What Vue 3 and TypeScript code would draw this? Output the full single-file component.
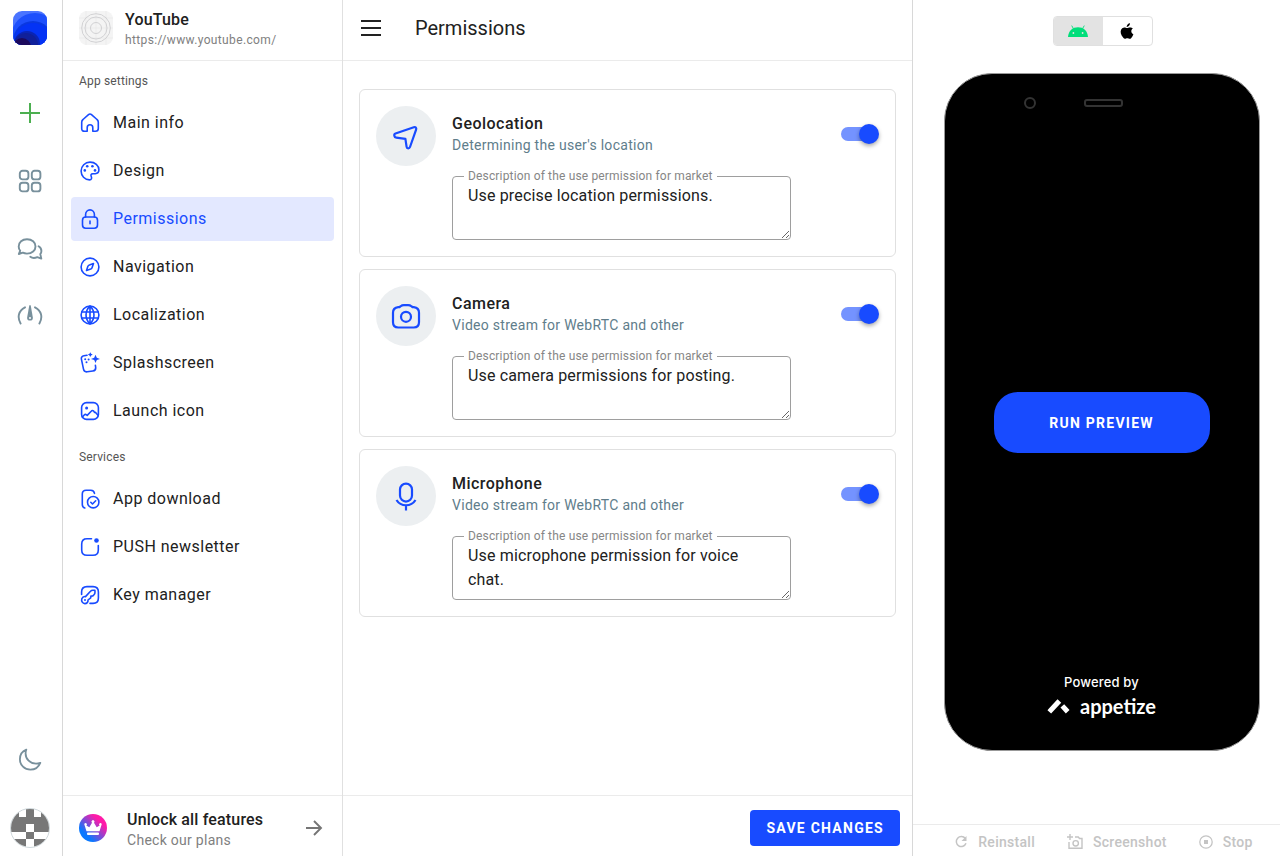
<script setup lang="ts">
import { ref } from 'vue'

interface NavItem {
  id: string
  label: string
  icon: string
}

interface Permission {
  id: string
  title: string
  subtitle: string
  description: string
  enabled: boolean
}

const settings: NavItem[] = [
  { id: 'main', label: 'Main info', icon: 'home' },
  { id: 'design', label: 'Design', icon: 'palette' },
  { id: 'permissions', label: 'Permissions', icon: 'lock' },
  { id: 'navigation', label: 'Navigation', icon: 'compass' },
  { id: 'localization', label: 'Localization', icon: 'globe' },
  { id: 'splash', label: 'Splashscreen', icon: 'splash' },
  { id: 'launch', label: 'Launch icon', icon: 'image' },
]

const services: NavItem[] = [
  { id: 'download', label: 'App download', icon: 'download' },
  { id: 'push', label: 'PUSH newsletter', icon: 'push' },
  { id: 'keys', label: 'Key manager', icon: 'key' },
]

const sections = [
  { title: 'App settings', items: settings },
  { title: 'Services', items: services },
]

const active = ref('permissions')
const platform = ref<'android' | 'ios'>('android')

const permissions = ref<Permission[]>([
  {
    id: 'geo',
    title: 'Geolocation',
    subtitle: "Determining the user's location",
    description: 'Use precise location permissions.',
    enabled: true,
  },
  {
    id: 'camera',
    title: 'Camera',
    subtitle: 'Video stream for WebRTC and other',
    description: 'Use camera permissions for posting.',
    enabled: true,
  },
  {
    id: 'mic',
    title: 'Microphone',
    subtitle: 'Video stream for WebRTC and other',
    description: 'Use microphone permission for voice chat.',
    enabled: true,
  },
])
</script>

<template>
  <div class="layout">
    <aside class="rail">
      <a class="logo" href="#" aria-label="Home">
        <svg width="34" height="34" viewBox="0 0 34 34">
          <defs>
            <clipPath id="logoClip"><rect width="34" height="34" rx="9" /></clipPath>
          </defs>
          <g clip-path="url(#logoClip)">
            <rect width="34" height="34" fill="#4a74ff" />
            <circle cx="22" cy="26" r="24" fill="#1e50fc" />
            <circle cx="20" cy="30" r="20" fill="#0a38e0" />
            <circle cx="20" cy="31" r="19" fill="#0433f5" />
            <circle cx="14" cy="33" r="13" fill="#0a24b4" />
            <circle cx="13" cy="34" r="12" fill="#10209a" />
            <circle cx="9" cy="36" r="9" fill="#1c0a5c" />
          </g>
        </svg>
      </a>
      <nav class="rail-nav" aria-label="Workspace">
        <button class="rail-btn add" aria-label="Add app">
          <svg width="20" height="20" viewBox="0 0 20 20"><path d="M10 0v20M0 10h20" stroke-width="2" /></svg>
        </button>
        <button class="rail-btn" aria-label="Apps">
          <svg width="24" height="24" viewBox="0 0 24 24" stroke-width="1.9">
            <rect x="1.800" y="1.800" width="8.6" height="8.6" rx="2.7" />
            <rect x="13.800" y="1.800" width="8.6" height="8.6" rx="2.7" />
            <rect x="1.800" y="13.800" width="8.6" height="8.6" rx="2.7" />
            <rect x="13.800" y="13.800" width="8.6" height="8.6" rx="2.7" />
          </svg>
        </button>
        <button class="rail-btn" aria-label="Messages">
          <svg width="26" height="24" viewBox="0 0 26 24" stroke-width="1.9" stroke-linecap="round" stroke-linejoin="round">
            <path d="M10 2.200c5 0 8.500 3.200 8.500 7.200s-3.500 7.200-8.500 7.200c-1.600 0-3-.3-4.200-.9L1.800 17l1.400-3.300C2.200 12.500 1.700 11 1.700 9.400 1.700 5.400 5.200 2.200 10 2.200z" />
            <path d="M21.600 9.200c1.700 1 2.800 2.700 2.800 4.700 0 1.200-.4 2.300-1.100 3.200l1 4.500-4-1.400c-2.200 1-5.500.8-7-.4" />
          </svg>
        </button>
        <button class="rail-btn" aria-label="Performance">
          <svg width="26" height="24" viewBox="0 2 26 24" stroke-width="1.900" stroke-linecap="round">
            <path d="M8 4.300C1.500 7.400 0 14.500 3.600 20.500M18 4.300c6.500 3.100 8 10.200 4.400 16.200" />
            <path d="M12.300 2.200l-2.200 12.500a2.900 2.900 0 1 0 5.800 0L13.700 2.200z" fill="currentColor" stroke="none" />
            <circle cx="13" cy="15" r="1" fill="#fff" stroke="none" />
          </svg>
        </button>
      </nav>
      <div class="rail-bottom">
        <button class="rail-btn" aria-label="Dark theme">
          <svg width="24" height="24" viewBox="0 0 24 24" stroke-width="1.800" stroke-linejoin="round">
            <path d="M8.300 1.700C4.300 3.300 1.900 7 1.900 11.300c0 5.900 4.700 10.400 10.500 10.400 4.400 0 8.200-2.600 9.900-6.800-1.600.6-2.700.8-4.300.8-5.800 0-10.400-4.500-10.400-10.300 0-1.300.2-2.500.7-3.700z" />
          </svg>
        </button>
        <button class="avatar" aria-label="Account">
          <svg width="38" height="38" viewBox="0 0 5 5" shape-rendering="crispEdges">
            <path d="M0 0h1v1h1V0h1v1h1V0h1v3H3V2H2v1H0zM2 3h1v1H2zM0 4h2v1H0zM3 4h2v1H3z" fill="#777" />
          </svg>
        </button>
      </div>
    </aside>

    <aside class="sidebar">
      <header class="bar app-head">
        <svg class="app-icon" width="34" height="34" viewBox="0 0 34 34" fill="none">
          <rect width="34" height="34" rx="8" fill="#f4f4f4" />
          <path d="M0 7h34M0 17h34M0 27h34M7 0v34M17 0v34M27 0v34" stroke="#e8e8e8" stroke-width="0.700" />
          <circle cx="17" cy="17" r="5.500" stroke="#d2d2d4" />
          <circle cx="17" cy="17" r="11" stroke="#d2d2d4" />
          <circle cx="17" cy="17" r="14.300" stroke="#d2d2d4" />
        </svg>
        <div class="app-text">
          <div class="app-name">YouTube</div>
          <div class="app-url">https://www.youtube.com/</div>
        </div>
      </header>

      <nav class="menu" aria-label="App sections">
        <section v-for="section in sections" :key="section.title">
          <h2 class="menu-title">{{ section.title }}</h2>
          <a
            v-for="item in section.items"
            :key="item.id"
            class="menu-item"
            :class="{ active: active === item.id }"
            href="#"
            @click.prevent="active = item.id"
          >
            <svg width="22" height="22" viewBox="0 0 22 22" class="menu-icon">
              <g v-if="item.icon === 'home'">
                <path d="M2.700 10.200c0-1.200.4-2 1.300-2.700l5.500-4.800c.9-.8 2.100-.8 3 0L18 7.500c.9.700 1.300 1.500 1.300 2.700v6.300c0 1.800-1 2.800-2.800 2.800h-2.700v-3.600c0-1.700-1.100-2.900-2.800-2.900s-2.800 1.200-2.800 2.900v3.600H5.500c-1.800 0-2.800-1-2.800-2.800z" />
              </g>
              <g v-else-if="item.icon === 'palette'">
                <path d="M11 2.100c5 0 8.900 3.400 8.900 7.700 0 2.500-1.300 3.800-3.700 3.900l-2.500.1c-1.700.1-2.100 1.200-1.500 2.500.9 1.900.3 3.600-1.600 3.600-4.900 0-8.500-4-8.500-8.900 0-4.900 4-8.900 8.900-8.900z" />
                <g class="dots"><circle cx="8.200" cy="6.300" r="1.300" /><circle cx="13.400" cy="6.300" r="1.300" /><circle cx="5.800" cy="10.400" r="1.300" /><circle cx="16" cy="10.400" r="1.300" /></g>
              </g>
              <g v-else-if="item.icon === 'lock'">
                <rect x="3.500" y="9" width="15" height="11.200" rx="3.200" />
                <path d="M6.600 9V6.500C6.600 3.800 8.500 1.900 11 1.900s4.400 1.900 4.400 4.600V9M11 13v2.800" />
              </g>
              <g v-else-if="item.icon === 'compass'">
                <circle cx="11" cy="11" r="8.900" />
                <path d="M14.500 7.500l-1.400 4.100c-.2.700-.7 1.200-1.400 1.500l-4.200 1.400 1.400-4.200c.3-.7.800-1.200 1.500-1.400z" />
              </g>
              <g v-else-if="item.icon === 'globe'">
                <circle cx="11" cy="11" r="8.900" />
                <path d="M11 2.100v17.800M2.800 8h16.400M2.800 14h16.400M11 2.100c-5.300 5-5.300 12.800 0 17.800 5.300-5 5.300-12.800 0-17.800z" />
              </g>
              <g v-else-if="item.icon === 'splash'">
                <path d="M8 3.200l-3 .6C3 4.200 2 5.400 2.400 7.200l2.100 10c.4 2 1.800 2.900 3.700 2.600l5.600-.8c2.100-.3 3.100-1.500 2.900-3.500l-.3-2.200" />
                <path class="dots" d="M16.500 2.700l1.300 3 3.200 1.200-3.200 1.200-1.300 3-1.300-3L12 6.900l3.200-1.200zM11.300.2l.8 1.600 1.600.8-1.600.8-.8 1.600-.8-1.600-1.600-.8 1.600-.8z" />
                <g class="dots"><circle cx="6.200" cy="7.200" r="1" /><circle cx="9.600" cy="7.500" r="1" /><circle cx="7.500" cy="10.300" r="1" /></g>
              </g>
              <g v-else-if="item.icon === 'image'">
                <rect x="2.600" y="2.600" width="16.800" height="16.800" rx="5" />
                <path d="M3.400 17l1.800-2c.8-.8 1.500-.8 2.300-.1l.7.500 4-4.200c.8-.9 1.700-.9 2.500-.1l.8 1.300.8-.1 2.700 3" />
                <circle class="dots" cx="7.600" cy="8" r="1.500" />
              </g>
              <g v-else-if="item.icon === 'download'">
                <path d="M5.800 20C4 19.600 3.300 18.300 3.300 16.500V6c0-2.600 1.200-3.800 3.800-3.800h4.700c2.300 0 3.400 1 3.700 3.200" />
                <circle cx="14.200" cy="14.200" r="5.700" />
                <path d="M11.800 14.300l1.700 1.700 3.200-3.200" />
              </g>
              <g v-else-if="item.icon === 'push'">
                <path d="M12.500 2.800H8c-3.700 0-5.300 1.600-5.300 5.300v5.800c0 3.700 1.600 5.300 5.300 5.300h6c3.700 0 5.300-1.600 5.300-5.300V9.500" />
                <circle class="dots" cx="17.500" cy="4.500" r="2.300" />
              </g>
              <g v-else>
                <path d="M2.600 10.500V8c0-3.800 1.600-5.400 5.400-5.400h6c3.800 0 5.400 1.600 5.400 5.400v6c0 3.800-1.600 5.400-5.400 5.400h-3" />
                <path d="M2.800 14.800a3.400 3.400 0 0 1 3.700-2.200l5-5.300c.8-.9 1.700-1.100 2.800-1l1.600.1.100 1.500c0 1.200-.2 2-1 2.800l-1.200 1.200-1.900.2-.2 1.700-2.700 2.200c.3 2.200-1.200 3.600-3.200 3.600-2.100 0-3.700-2.300-3-4.800z" />
                <circle class="dots" cx="6" cy="16" r="1" />
              </g>
            </svg>
            <span>{{ item.label }}</span>
          </a>
        </section>
      </nav>

      <a class="foot promo" href="#">
        <svg width="28" height="28" viewBox="0 0 28 28">
          <defs>
            <linearGradient id="crownFill" x1="0.150" y1="0.850" x2="0.850" y2="0.150">
              <stop offset="0.150" stop-color="#0a78ff" />
              <stop offset="0.850" stop-color="#ff1aa8" />
            </linearGradient>
          </defs>
          <circle cx="14" cy="14" r="14" fill="url(#crownFill)" />
          <path d="M5.600 11.200a1.300 1.300 0 1 1 1.700.300l3 1.700 2.700-4.400a1.500 1.500 0 1 1 2 0l2.700 4.400 3-1.700a1.300 1.300 0 1 1 1.700-.300l-1.900 6h-13z" fill="#fff" />
          <rect x="8" y="18.600" width="12" height="2.300" rx="1" fill="#fff" />
        </svg>
        <div class="promo-text">
          <div class="promo-title">Unlock all features</div>
          <div class="promo-sub">Check our plans</div>
        </div>
        <svg width="18" height="18" viewBox="0 0 18 18" fill="none" stroke="#757575" stroke-width="1.900">
          <path d="M1 9h15M9 2l7 7-7 7" />
        </svg>
      </a>
    </aside>

    <main class="main">
      <header class="bar main-head">
        <button class="burger" aria-label="Toggle menu">
          <svg width="20" height="18" viewBox="0 0 20 18"><path d="M0 2h20M0 9h20M0 16h20" stroke="#222" stroke-width="2" /></svg>
        </button>
        <h1>Permissions</h1>
      </header>

      <div class="cards">
        <section v-for="p in permissions" :key="p.id" class="card">
          <div class="bubble">
            <svg width="32" height="32" viewBox="0 0 32 32" fill="none" stroke="#184bff" stroke-width="2.200" stroke-linecap="round" stroke-linejoin="round">
              <path v-if="p.id === 'geo'" d="M5.500 13.500L23.800 7.300c1.700-.6 2.900.5 2.300 2.300L20 27c-.7 1.900-3.100 1.800-3.400-.2l-1.200-8-9.100-1.200c-2.200-.3-2.800-3.400-.8-4.100z" />
              <g v-else-if="p.id === 'camera'">
                <path d="M9.500 7.200l1.200-1c.9-.8 1.800-1.100 3.200-1.100h4.200c1.400 0 2.300.3 3.200 1.100l1.200 1h1.300c3.800.5 5.200 2 5.200 5.500v9.600c0 3.700-1.500 5.200-5.200 5.200H8.200C4.500 27.500 3 26 3 22.300v-9.600c0-3.500 1.400-5 5.200-5.500z" />
                <circle cx="16" cy="16.800" r="5" />
              </g>
              <g v-else stroke-linecap="butt">
                <rect x="10" y="3.600" width="12" height="18" rx="6" />
                <path d="M6.500 20c4.300 7 14.700 7 19 0M16 25v5.500" />
              </g>
            </svg>
          </div>
          <div class="card-body">
            <h2 class="card-title">{{ p.title }}</h2>
            <p class="card-sub">{{ p.subtitle }}</p>
            <div class="field">
              <label :for="p.id + '-text'">Description of the use permission for market</label>
              <textarea :id="p.id + '-text'" v-model="p.description" rows="2"></textarea>
            </div>
          </div>
          <input v-model="p.enabled" class="switch" type="checkbox" :aria-label="p.title" />
        </section>
      </div>

      <footer class="foot main-foot">
        <button class="save">SAVE CHANGES</button>
      </footer>
    </main>

    <aside class="preview">
      <div class="platforms" role="group" aria-label="Platform">
        <button :class="{ on: platform === 'android' }" aria-label="Android" @click="platform = 'android'">
          <svg width="20" height="12" viewBox="0 0 20 12">
            <path d="M5.300 3.400L3.700.6M14.700 3.400L16.300.6" stroke="#00de7a" stroke-width="0.900" fill="none" />
            <path d="M0 12C.5 5.500 4.700 2.300 10 2.300s9.500 3.200 10 9.700z" fill="#00de7a" />
            <circle cx="5.400" cy="8" r="0.900" fill="#e3e3e3" /><circle cx="14.600" cy="8" r="0.900" fill="#e3e3e3" />
          </svg>
        </button>
        <button :class="{ on: platform === 'ios' }" aria-label="iOS" @click="platform = 'ios'">
          <svg width="14" height="16" viewBox="0 0 14 16">
            <path d="M9.900.2c.1 1-.3 1.900-.9 2.600-.6.700-1.500 1.200-2.300 1.100-.1-.9.400-1.900.9-2.500C8.200.7 9.200.2 9.900.2zM13 5.500c-1.300.8-1.700 1.700-1.700 2.800 0 1.400.9 2.500 2.100 2.900-.5 1.400-1.200 2.600-2.100 3.700-.5.6-1 .9-1.700.9-.8 0-1.200-.5-2.300-.5s-1.500.5-2.300.5c-.7 0-1.200-.4-1.700-1C.600 11.800.100 8.500 1.200 6.500c.7-1.300 1.900-2.100 3.200-2.100 1.100 0 1.800.6 2.800.6.900 0 1.500-.6 2.800-.6 1.100 0 2.300.4 3 1.100z" />
          </svg>
        </button>
      </div>

      <div class="phone">
        <div class="phone-top"><i class="lens"></i><i class="speaker"></i></div>
        <button class="run">RUN PREVIEW</button>
        <div class="powered">
          <div class="powered-by">Powered by</div>
          <div class="brand">
            <svg width="23" height="16" viewBox="0 0 23 16" stroke="#fff" stroke-width="5" stroke-linecap="square">
              <path d="M4 12l6.700-7.200M17 9.700l2 2.200" />
            </svg>
            <span>appetize</span>
          </div>
        </div>
      </div>

      <div class="actions">
        <button disabled>
          <svg width="14" height="14" viewBox="0 0 14 14" stroke-width="1.500">
            <path d="M11.300 3.500A5 5 0 1 0 12 8.300" /><path d="M12.500 1v5h-5z" fill="currentColor" stroke="none" />
          </svg>
          Reinstall
        </button>
        <button disabled>
          <svg width="16" height="16" viewBox="0 0 16 16" stroke-width="1.400">
            <path d="M3 0v6M0 3h6M2 8v6.300h13V4.500h-2.500L11.300 3H8" /><circle cx="8.700" cy="9.300" r="2.700" />
          </svg>
          Screenshot
        </button>
        <button disabled>
          <svg width="14" height="14" viewBox="0 0 14 14" stroke-width="1.300">
            <circle cx="7" cy="7" r="6.200" /><rect x="5" y="5" width="4" height="4" fill="currentColor" stroke="none" />
          </svg>
          Stop
        </button>
      </div>
    </aside>
  </div>
</template>

<style>
body {
  margin: 0;
}
</style>

<style scoped>
.layout {
  --blue: #184bff;
  --line: #e0e0e0;
  display: grid;
  grid-template-columns: 63px 280px minmax(0, 1fr) 368px;
  min-height: 100vh;
  background: #fff;
  color: #212121;
  font-family: Roboto, "Liberation Sans", sans-serif;
  font-size: 16px;
  line-height: 24px;
  letter-spacing: 0.01em;
}
.layout * {
  box-sizing: border-box;
}
h1,
h2,
p {
  margin: 0;
}
svg {
  display: block;
  flex: none;
}
button {
  font-family: inherit;
  border: 0;
  padding: 0;
  background: none;
  cursor: pointer;
}
a {
  color: inherit;
  text-decoration: none;
}

.rail {
  display: flex;
  flex-direction: column;
  align-items: center;
  padding: 11px 2px 8px 0;
  border-right: 1px solid #d8d8d8;
}
.rail-nav {
  display: flex;
  flex-direction: column;
  gap: 28px;
  margin-top: 48px;
}
.rail-btn {
  display: grid;
  place-items: center;
  width: 40px;
  height: 40px;
  color: #78909c;
}
.rail-btn svg {
  fill: none;
  stroke: currentColor;
}
.rail-btn.add {
  color: #4caf50;
}
.rail-bottom {
  display: flex;
  flex-direction: column;
  gap: 28px;
  margin-top: auto;
}
.avatar {
  width: 40px;
  height: 40px;
  border: 1px solid #cfd8dc;
  border-radius: 50%;
  overflow: hidden;
}

.bar {
  display: flex;
  align-items: center;
  height: 61px;
  padding-bottom: 4px;
  border-bottom: 1px solid #ebebeb;
}
.foot {
  display: flex;
  align-items: center;
  height: 61px;
  padding-top: 4px;
  border-top: 1px solid #ebebeb;
}

.sidebar {
  display: flex;
  flex-direction: column;
  border-right: 1px solid var(--line);
}
.app-head {
  gap: 12px;
  padding-left: 16px;
}
.app-text {
  padding-top: 4px;
}
.app-name {
  font-weight: 500;
  line-height: 20px;
}
.app-url {
  font-size: 12px;
  line-height: 20px;
  letter-spacing: 0.03em;
  color: #808080;
}
.menu {
  flex: 1;
  padding: 0 8px;
}
.menu-title {
  padding: 0 8px;
  font-size: 12px;
  font-weight: 400;
  line-height: 40px;
  color: #555;
}
.menu-item {
  display: flex;
  align-items: center;
  gap: 12px;
  height: 44px;
  margin-bottom: 4px;
  padding: 0 8px;
  border-radius: 4px;
  letter-spacing: 0.03em;
}
.menu-item.active {
  background: #e3e8ff;
  color: var(--blue);
}
.menu-icon {
  fill: none;
  stroke: var(--blue);
  stroke-width: 1.6;
  stroke-linecap: round;
  stroke-linejoin: round;
}
.dots {
  fill: var(--blue);
  stroke: none;
}
.promo {
  padding-left: 16px;
  padding-right: 19px;
}
.promo-text {
  flex: 1;
  padding: 3px 0 0 20px;
}
.promo-title {
  font-weight: 500;
  line-height: 20px;
}
.promo-sub {
  font-size: 14px;
  line-height: 20px;
  letter-spacing: 0.02em;
  color: #808080;
}

.main {
  display: flex;
  flex-direction: column;
}
.main-head {
  gap: 34px;
  padding-left: 18px;
}
h1 {
  font-size: 20px;
  font-weight: 400;
  letter-spacing: normal;
}
.cards {
  flex: 1;
  display: flex;
  flex-direction: column;
  gap: 12px;
  padding: 28px 16px;
}
.card {
  display: flex;
  align-items: flex-start;
  padding: 16px;
  border: 1px solid var(--line);
  border-radius: 6px;
}
.bubble {
  display: grid;
  place-items: center;
  width: 60px;
  height: 60px;
  flex: none;
  border-radius: 50%;
  background: #eceff1;
}
.card-body {
  flex: 1;
  padding: 7px 0 0 16px;
}
.card-title {
  font-size: 16px;
  font-weight: 500;
  line-height: 22px;
  letter-spacing: 0.03em;
}
.card-sub {
  margin-bottom: 21px;
  font-size: 14px;
  line-height: 20px;
  letter-spacing: 0.02em;
  color: #607d8b;
}
.field {
  position: relative;
}
.field label {
  position: absolute;
  top: -8px;
  left: 12px;
  padding: 0 4px;
  background: #fff;
  color: #868686;
  font-size: 12px;
  line-height: 16px;
}
textarea {
  display: block;
  width: 100%;
  height: 64px;
  padding: 7px 31px 7px 15px;
  border: 1px solid #9e9e9e;
  border-radius: 4px;
  background: #fff;
  color: #212121;
  font: inherit;
  letter-spacing: inherit;
  overflow: hidden;
  resize: vertical;
}
.switch {
  appearance: none;
  position: relative;
  display: flex;
  align-items: center;
  width: 38px;
  height: 20px;
  margin: 18px 0 0 50px;
  cursor: pointer;
}
.switch::before {
  content: "";
  width: 36px;
  height: 14px;
  border-radius: 7px;
  background: #bdbdbd;
}
.switch::after {
  content: "";
  position: absolute;
  left: 0;
  width: 20px;
  height: 20px;
  border-radius: 50%;
  background: #fff;
  box-shadow: 0 2px 4px rgba(0, 0, 0, 0.35);
}
.switch:checked::before {
  background: #7493ff;
}
.switch:checked::after {
  left: 18px;
  background: var(--blue);
}
.main-foot {
  justify-content: flex-end;
  padding-right: 12px;
}
.save {
  height: 36px;
  padding: 0 16px;
  border-radius: 4px;
  background: var(--blue);
  color: #fff;
  font-size: 14px;
  font-weight: 700;
  letter-spacing: 0.09em;
}

.preview {
  display: flex;
  flex-direction: column;
  align-items: center;
  padding-top: 16px;
  border-left: 1px solid #d8d8d8;
}
.platforms {
  display: flex;
  width: 100px;
  height: 30px;
  margin-left: 12px;
  border: 1px solid var(--line);
  border-radius: 4px;
  overflow: hidden;
}
.platforms button {
  display: grid;
  place-items: center;
  flex: 1;
}
.platforms .on {
  background: #e3e3e3;
}
.phone {
  display: flex;
  flex-direction: column;
  align-items: center;
  width: 316px;
  height: 678px;
  margin: 27px 0 0 10px;
  padding: 23px 0 30px;
  border: 1px solid #999;
  border-radius: 48px;
  background: #000;
  color: #fff;
}
.phone-top {
  display: flex;
  align-items: center;
  gap: 48px;
  padding-right: 56px;
}
.lens {
  width: 12px;
  height: 12px;
  border: 2px solid #333;
  border-radius: 50%;
}
.speaker {
  width: 39px;
  height: 8px;
  border: 2px solid #333;
  border-radius: 3px;
}
.run {
  width: 216px;
  height: 61px;
  margin: auto 0 219px;
  border-radius: 24px;
  background: var(--blue);
  color: #fff;
  font-size: 14px;
  font-weight: 700;
  letter-spacing: 0.09em;
}
.powered {
  display: flex;
  flex-direction: column;
  align-items: center;
}
.powered-by {
  font-family: Inter, sans-serif;
  font-size: 13px;
  font-weight: 500;
  line-height: 20px;
}
.brand {
  display: flex;
  align-items: center;
  gap: 10px;
  font-family: Lato, sans-serif;
  font-size: 20px;
  font-weight: 700;
  line-height: 28px;
  letter-spacing: normal;
}
.actions {
  display: flex;
  justify-content: center;
  gap: 32px;
  width: 100%;
  margin-top: auto;
  padding: 2px 0 0 14px;
  border-top: 1px solid #ebebeb;
}
.actions button {
  display: flex;
  align-items: center;
  gap: 10px;
  height: 29px;
  color: #c4c4c4;
  font-size: 14px;
  font-weight: 500;
  letter-spacing: 0.02em;
  cursor: default;
}
.actions svg {
  fill: none;
  stroke: currentColor;
}
</style>
